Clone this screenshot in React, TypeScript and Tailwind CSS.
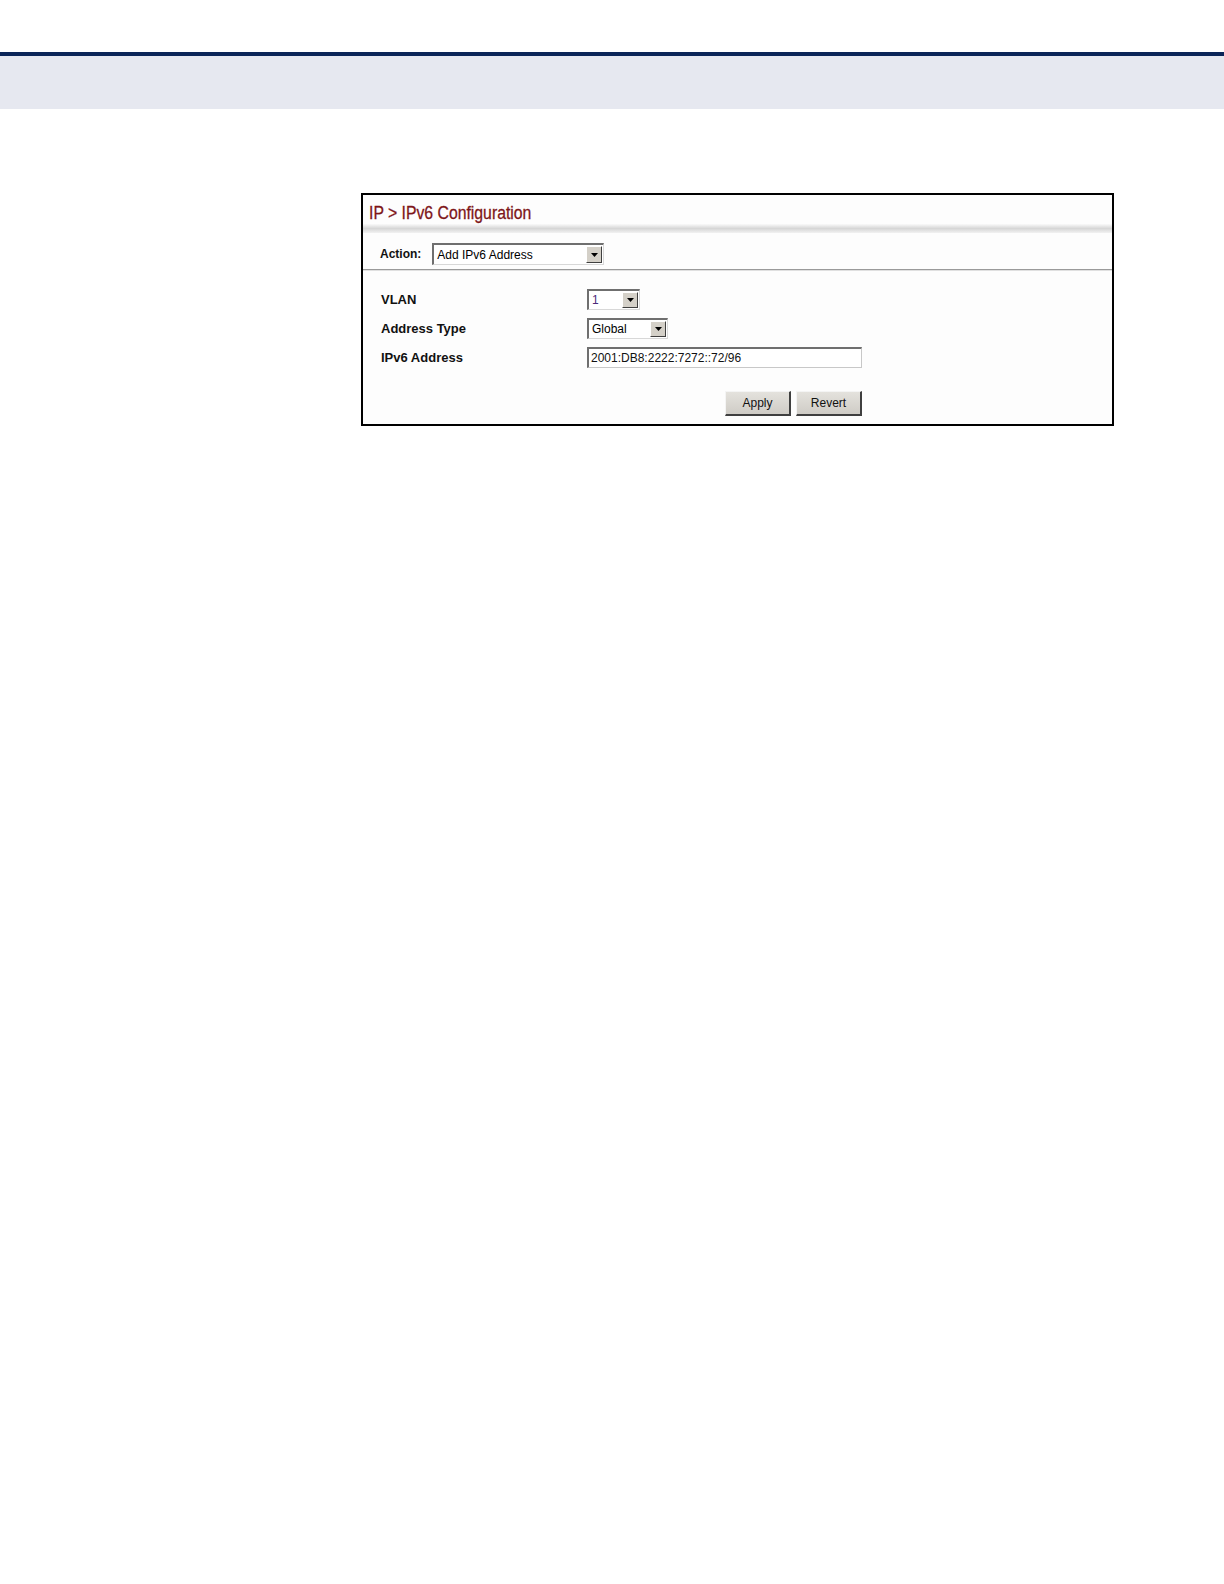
import React from "react";

function Arrow() {
  return (
    <div className="flex h-full w-[16px] items-center justify-center border-t border-l border-t-white border-l-white border-r border-b border-r-[#404040] border-b-[#404040] bg-[#d4d0c8]">
      <svg width="7" height="4" viewBox="0 0 7 4">
        <polygon points="0,0 7,0 3.5,4" fill="#000" />
      </svg>
    </div>
  );
}

function Select({ value, width, textClass = "text-black" }: { value: string; width: string; textClass?: string }) {
  return (
    <div
      className={`flex h-full items-stretch border-t-2 border-l-2 border-t-[#6f6f6f] border-l-[#6f6f6f] border-r border-b border-r-[#d8d8d8] border-b-[#d8d8d8] bg-white ${width}`}
    >
      <div className={`flex flex-1 items-center pl-[3px] text-[12px] leading-none ${textClass}`}>{value}</div>
      <div className="p-[1px]">
        <Arrow />
      </div>
    </div>
  );
}

function Button({ label }: { label: string }) {
  return (
    <div className="flex h-[25px] w-[66px] items-center justify-center border-t border-l border-t-[#f4f4f4] border-l-[#f4f4f4] border-r-2 border-b-2 border-r-[#3f3f3f] border-b-[#3f3f3f] bg-gradient-to-b from-[#e4e2dd] to-[#cfccc6] text-[12px] text-[#111]">
      {label}
    </div>
  );
}

export default function App() {
  return (
    <div className="min-h-[1584px] w-[1224px] bg-white" style={{ fontFamily: '"Liberation Sans", Arial, sans-serif' }}>
      <div className="h-[52px]" />
      <div className="h-[4px] bg-[#0b2558]" />
      <div className="h-[53px] bg-[#e6e8f0]" />
      <div className="ml-[361px] mt-[84px] w-[753px] border-2 border-black bg-[#fdfdfd]">
        <div className="h-[29px] pl-[6px] pt-[7px]">
          <div className="inline-block origin-left scale-x-[0.83] whitespace-nowrap text-[19px] leading-[22px] text-[#7d1518] [-webkit-text-stroke:0.3px_#7d1518]">
            IP &gt; IPv6 Configuration
          </div>
        </div>
        <div className="h-[9px] bg-gradient-to-b from-[#fafafa] via-[#d6d6d6] to-[#f2f2f2]" />
        <div className="flex h-[36px] items-start pl-[17px] pt-[10px]">
          <div className="flex h-[22px] items-center text-[12px] font-bold text-[#111]">Action:</div>
          <div className="ml-[11px] h-[22px]">
            <Select value="Add IPv6 Address" width="w-[172px]" />
          </div>
        </div>
        <div className="h-[1px] bg-[#9a9a9a]" />
        <div className="h-[1px] bg-[#e0e0e0]" />
        <div className="pl-[18px] pt-[18px] pb-[8px]">
          <div className="flex flex-col gap-[8px]">
            <div className="flex h-[21px] items-center">
              <div className="w-[206px] text-[13px] font-bold text-[#111]">VLAN</div>
              <div className="h-[21px]">
                <Select value="1" width="w-[53px]" textClass="text-[#4a2a7a]" />
              </div>
            </div>
            <div className="flex h-[21px] items-center">
              <div className="w-[206px] text-[13px] font-bold text-[#111]">Address Type</div>
              <div className="h-[21px]">
                <Select value="Global" width="w-[81px]" />
              </div>
            </div>
            <div className="flex h-[21px] items-center">
              <div className="w-[206px] text-[13px] font-bold text-[#111]">IPv6 Address</div>
              <div className="flex h-[21px] w-[275px] items-center border-t-2 border-l-2 border-t-[#6f6f6f] border-l-[#6f6f6f] border-r border-b border-r-[#c8c8c8] border-b-[#c8c8c8] bg-white pl-[2px] text-[12px] text-[#111]">
                2001:DB8:2222:7272::72/96
              </div>
            </div>
          </div>
          <div className="mt-[23px] flex w-[481px] justify-end gap-[5px]">
            <Button label="Apply" />
            <Button label="Revert" />
          </div>
        </div>
      </div>
    </div>
  );
}
